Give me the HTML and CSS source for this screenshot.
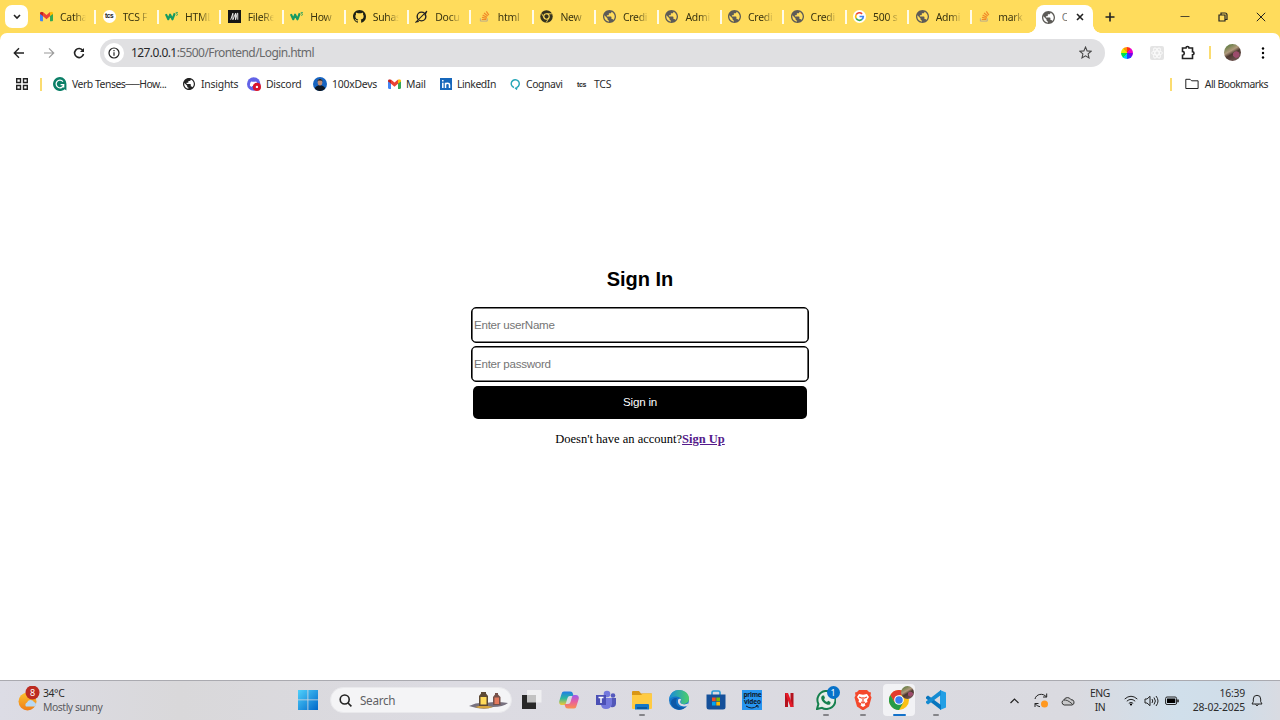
FILE: index.html
```html
<!DOCTYPE html>
<html lang="en">
<head>
<meta charset="utf-8">
<title>Login</title>
<link rel="stylesheet" href="styles.css">
</head>
<body>
<svg class="sprite" aria-hidden="true">
  <defs>
    <linearGradient id="winGrad" x1="0" y1="0" x2="1" y2="1"><stop offset="0" stop-color="#4fd0fb"/><stop offset="1" stop-color="#0067c9"/></linearGradient>
    <linearGradient id="copA" x1="0" y1="0" x2="0" y2="1"><stop offset="0" stop-color="#1f7be8"/><stop offset=".5" stop-color="#2cb8a0"/><stop offset="1" stop-color="#f5c932"/></linearGradient>
    <linearGradient id="copB" x1="0" y1="0" x2="0" y2="1"><stop offset="0" stop-color="#9b5cf0"/><stop offset=".5" stop-color="#e8609c"/><stop offset="1" stop-color="#fb914d"/></linearGradient>
    <linearGradient id="edgeA" x1="0" y1="0" x2="1" y2="0"><stop offset="0" stop-color="#1789dc"/><stop offset="1" stop-color="#4dd06a"/></linearGradient>
    <linearGradient id="sun" x1="0" y1="0" x2="0" y2="1"><stop offset="0" stop-color="#fcc12c"/><stop offset="1" stop-color="#f07d18"/></linearGradient>
  </defs>
  <symbol id="gmail" viewBox="0 0 24 18"><path fill="#4285f4" d="M0 3v13a2 2 0 0 0 2 2h3.500V7z"/><path fill="#34a853" d="M18.500 7v11H22a2 2 0 0 0 2-2V3z"/><path fill="#ea4335" d="M5 0 12 6l7-6v8l-7 6-7-6z"/><path fill="#c5221f" d="M0 3.500C0 .4 3-.8 5.500 1.200V8L0 4.500z"/><path fill="#fbbc04" d="M24 3.500C24 .4 21-.8 18.500 1.200V8L24 4.500z"/></symbol>
  <symbol id="globe" viewBox="2 2 20 20"><path fill="currentColor" d="M12 2C6.480 2 2 6.480 2 12s4.480 10 10 10 10-4.480 10-10S17.520 2 12 2zm-1 17.930c-3.950-.49-7-3.850-7-7.930 0-.62.080-1.210.210-1.790L9 15v1c0 1.100.9 2 2 2v1.930zm6.900-2.540c-.26-.81-1-1.390-1.900-1.390h-1v-3c0-.55-.45-1-1-1H8v-2h2c.55 0 1-.45 1-1V7h2c1.100 0 2-.9 2-2v-.41c2.930 1.190 5 4.060 5 7.410 0 2.080-.8 3.970-2.100 5.390z"/></symbol>
  <symbol id="w3" viewBox="0 0 28 20"><path fill="none" stroke="#169b62" stroke-width="4.500" stroke-linejoin="round" d="M2 5l5 11 4-10 5 10 5-13"/><path fill="none" stroke="#169b62" stroke-width="1.800" d="M23 1h4l-2 3c3 0 3 4-1 3.500"/></symbol>
  <symbol id="stack" viewBox="0 0 24 24"><path fill="none" stroke="#b5a68d" stroke-width="2" d="M3 16v6h15v-6"/><path fill="none" stroke="#f08a28" stroke-width="2.600" d="M6 18.500h10M6.500 14l10 2M8 9l9.500 4.500M11 4.500l8 6.500M16 1l5.500 8"/></symbol>
  <symbol id="chrome" viewBox="0 0 24 24"><circle cx="12" cy="12" r="12" fill="#fbc116"/><path fill="#e33b2e" d="M1.600 6A12 12 0 0 1 22.400 6H12L6.800 15z"/><path fill="#269b48" d="M1.600 6A12 12 0 0 0 12 24l5.200-9H6.800z"/><circle cx="12" cy="12" r="5.800" fill="#fff"/><circle cx="12" cy="12" r="4.500" fill="#3a7df0"/></symbol>
</svg>

<header class="tabstrip">
  <div class="tab-search"><svg width="8" height="6" viewBox="0 0 8 6"><path d="M1 1l3 3 3-3" class="line w15"/></svg></div>
  <nav class="tabs">
    <div class="tab"><svg class="fav" viewBox="0 0 24 24"><use href="#gmail" y="3" width="24" height="18"/></svg><span>Catha</span></div>
    <div class="tab"><b class="fav tcs-round">tcs</b><span>TCS F</span></div>
    <div class="tab"><svg class="fav" viewBox="0 0 28 24"><use href="#w3" y="2" width="28" height="20"/></svg><span>HTML</span></div>
    <div class="tab"><svg class="fav" viewBox="0 0 24 24"><path d="M0 0h24v24H0z" fill="#151515"/><path d="M5 18L9 6v12l5-12v12l3-12h1v12" fill="none" stroke="#fff" stroke-width="1.600"/></svg><span>FileRe</span></div>
    <div class="tab"><svg class="fav" viewBox="0 0 28 24"><use href="#w3" y="2" width="28" height="20"/></svg><span>How</span></div>
    <div class="tab"><svg class="fav" viewBox="0 0 16 16"><path fill="#1d2114" fill-rule="evenodd" d="M8 0C3.580 0 0 3.580 0 8c0 3.540 2.290 6.530 5.470 7.590.4.070.55-.17.55-.38v-1.490c-2.230.48-2.700-.94-2.700-.94-.36-.92-.89-1.170-.89-1.170-.73-.5.050-.49.050-.49.810.06 1.230.83 1.230.83.720 1.230 1.880.87 2.340.67.070-.52.280-.87.510-1.070-1.780-.2-3.640-.89-3.640-3.950 0-.87.310-1.590.82-2.150-.08-.2-.36-1.020.08-2.120 0 0 .67-.21 2.200.82a7.700 7.700 0 0 1 4 0c1.530-1.040 2.200-.82 2.200-.82.440 1.100.16 1.920.08 2.120.51.560.82 1.270.82 2.150 0 3.070-1.870 3.750-3.650 3.950.29.250.54.730.54 1.480v2.200c0 .21.150.46.550.38A8 8 0 0 0 16 8c0-4.420-3.580-8-8-8z"/></svg><span>Suhas</span></div>
    <div class="tab"><svg class="fav" viewBox="0 0 24 24"><circle cx="12" cy="12" r="8" class="line w25"/><path d="M22 2L2 22l5-1M22 2l-4 8" class="line w2"/></svg><span>Docu</span></div>
    <div class="tab"><svg class="fav small" viewBox="0 0 24 24"><use href="#stack"/></svg><span>html</span></div>
    <div class="tab"><svg class="fav" viewBox="0 0 24 24"><circle cx="12" cy="12" r="11.500" fill="#35331f"/><circle cx="12" cy="12" r="5" fill="none" stroke="#ffdc5c" stroke-width="2"/><path d="M12 7h10M7.600 14.500L3 6.500M16.400 14.500L11.500 23" stroke="#ffdc5c" stroke-width="1.600"/></svg><span>New</span></div>
    <div class="tab"><svg class="fav grey" viewBox="0 0 24 24"><use href="#globe"/></svg><span>Credi</span></div>
    <div class="tab"><svg class="fav grey" viewBox="0 0 24 24"><use href="#globe"/></svg><span>Admi</span></div>
    <div class="tab"><svg class="fav grey" viewBox="0 0 24 24"><use href="#globe"/></svg><span>Credi</span></div>
    <div class="tab"><svg class="fav grey" viewBox="0 0 24 24"><use href="#globe"/></svg><span>Credi</span></div>
    <div class="tab"><svg class="fav" viewBox="0 0 24 24"><circle cx="12" cy="12" r="12" fill="#fff"/><g fill="none" stroke-width="3"><path stroke="#ea4335" d="M5.900 8.500A7 7 0 0 1 16.800 7"/><path stroke="#fbbc05" d="M5.900 8.500a7 7 0 0 0 0 7"/><path stroke="#34a853" d="M5.900 15.500A7 7 0 0 0 16.500 17.400"/><path stroke="#4285f4" d="M12 12h7c0 2.300-.9 4-2.500 5.400"/></g></svg><span>500 s</span></div>
    <div class="tab"><svg class="fav grey" viewBox="0 0 24 24"><use href="#globe"/></svg><span>Admi</span></div>
    <div class="tab last"><svg class="fav small" viewBox="0 0 24 24"><use href="#stack"/></svg><span>mark</span></div>
  </nav>
  <div class="tab-active"><svg class="fav grey" viewBox="0 0 24 24"><use href="#globe"/></svg><span>C</span><svg width="8" height="8" viewBox="0 0 8 8"><path d="M1 1l6 6M7 1L1 7" class="line w15"/></svg></div>
  <svg class="new-tab" width="10" height="10" viewBox="0 0 10 10"><path d="M5 .5v9M.5 5h9" class="line w15"/></svg>
  <div class="window-controls">
    <svg width="10" height="10" viewBox="0 0 10 10"><path d="M.5 4.500h9" class="line thin"/></svg>
    <svg width="10" height="10" viewBox="0 0 10 10"><path d="M1 3h6v6H1zM3 2.500V1h4a2 2 0 0 1 2 2v4.500H7.500" class="line w12"/></svg>
    <svg width="10" height="10" viewBox="0 0 10 10"><path d="M.8.8l8.400 8.400M9.200.8L.8 9.200" class="line"/></svg>
  </div>
</header>

<div class="toolbar-wrap">
<section class="toolbar">
  <div class="nav-buttons">
    <svg width="12" height="12" viewBox="0 0 12 12"><path d="M11 6H1.500M6 1.300L1.300 6 6 10.700" class="line w14"/></svg>
    <svg class="disabled" width="12" height="12" viewBox="0 0 12 12"><path d="M1 6h9.500M6 1.300L10.700 6 6 10.700" class="line w12"/></svg>
    <svg width="12" height="12" viewBox="0 0 12 12"><path d="M9.800 3.500A4.500 4.500 0 1 0 10.500 7" class="line w15"/><path d="M11 1v4H7z" fill="#222"/></svg>
  </div>
  <div class="omnibox">
    <div class="site-info"><svg width="12" height="12" viewBox="0 0 12 12"><circle cx="6" cy="6" r="5" class="line w12"/><path d="M6 5.200v3.500M6 3v1.200" class="line w12"/></svg></div>
    <div class="url">127.0.0.1<span>:5500/Frontend/Login.html</span></div>
    <svg class="star" width="13" height="13" viewBox="0 0 24 24"><path d="M12 2l3 7 7.500.7-5.700 5 1.700 7.300-6.500-3.900L5.500 22l1.700-7.300-5.700-5L9 9z" fill="none" stroke="#474747" stroke-width="2"/></svg>
  </div>
  <div class="extensions">
    <div class="color-wheel"></div>
    <svg class="ext-react" width="14" height="14" viewBox="0 0 14 14"><rect width="14" height="14" rx="2" fill="#e4e4e4"/><g fill="none" stroke="#fafafa"><ellipse cx="7" cy="7" rx="5.500" ry="2"/><ellipse cx="7" cy="7" rx="5.500" ry="2" transform="rotate(60 7 7)"/><ellipse cx="7" cy="7" rx="5.500" ry="2" transform="rotate(120 7 7)"/></g></svg>
    <svg class="ext-puzzle" width="15" height="15" viewBox="0 0 15 15"><path d="M1.500 3H5a1.500 1.500 0 0 1 3 0h3.500v3.700a1.500 1.500 0 0 1 0 3v3.800h-10v-3.300c2.400-.2 2.400-3.600 0-3.800z" class="line w15"/></svg>
    <i class="bar"></i>
    <div class="avatar"></div>
    <svg class="menu" width="4" height="12" viewBox="0 0 4 12"><circle cx="2" cy="1.500" r="1.200"/><circle cx="2" cy="6" r="1.200"/><circle cx="2" cy="10.500" r="1.200"/></svg>
  </div>
</section>
</div>

<nav class="bookmarks">
  <svg class="apps" width="12" height="12" viewBox="0 0 12 12"><path d="M.7.700h3.800v3.800H.7zM7.500.7h3.800v3.800H7.500zM.7 7.500h3.800v3.800H.7zM7.500 7.500h3.800v3.800H7.500z" class="line w14"/></svg>
  <i class="bar"></i>
  <a class="bm b1"><svg width="14" height="14" viewBox="0 0 24 24"><path d="M12 0A12 12 0 1 0 20 21l3 2V12A11.500 11.500 0 0 0 12 0z" fill="#0b7f67"/><path d="M17 8A6.500 6.500 0 1 0 18.300 13H13M18.300 12v6" fill="none" stroke="#fff" stroke-width="2.200"/></svg><span>Verb Tenses──How...</span></a>
  <a class="bm b2"><svg class="dark" width="12" height="12" viewBox="0 0 24 24"><use href="#globe"/></svg><span>Insights</span></a>
  <a class="bm b3"><svg width="14" height="14" viewBox="0 0 24 24"><circle cx="11.500" cy="12" r="11.500" fill="#6263e7"/><path d="M5 15c0-4 1-7 2.500-7.500l2 .5h4l2-.5c1.500.5 2.500 3.500 2.500 7.500l-3 2-1-1.500H9L8 17z" fill="#fff"/><circle cx="17" cy="17" r="7" fill="#d9152c"/><circle cx="17" cy="17" r="2" fill="#fff"/></svg><span>Discord</span></a>
  <a class="bm b4"><svg width="14" height="14" viewBox="0 0 24 24"><circle cx="12" cy="12" r="12" fill="#1764c0"/><path d="M3 20q2-6 9-6t9 6a12 12 0 0 1-18 0z" fill="#0e1824"/><ellipse cx="12" cy="9" rx="4" ry="5.500" fill="#c38e74"/><path d="M7.500 8c0-6 9-6 9 0l-2-2H9z" fill="#171b20"/></svg><span>100xDevs</span></a>
  <a class="bm b5"><svg width="13" height="10" viewBox="0 0 24 18"><use href="#gmail"/></svg><span>Mail</span></a>
  <a class="bm b6"><svg width="12" height="12" viewBox="0 0 12 12"><path fill="#1767bb" d="M0 0h12v12H0z"/><path d="M2.800 4.800V10M2.800 2v1.500M5.500 10V4.800M5.500 7c0-2.300 4-2.500 4 0v3" fill="none" stroke="#fff" stroke-width="1.500"/></svg><span>LinkedIn</span></a>
  <a class="bm b7"><svg width="11" height="12" viewBox="0 0 11 12"><path d="M4 9.500A4 4 0 1 1 7 9.300L6.500 11 5 9.700" fill="none" stroke="#24a6b7" stroke-width="1.400"/></svg><span>Cognavi</span></a>
  <a class="bm b8"><b class="tcs">tcs</b><span>TCS</span></a>
  <div class="all-bookmarks"><i class="bar"></i><svg width="14" height="12" viewBox="0 0 14 12"><path d="M.8 1.300h4.300l1.500 1.500h6.500v7.700H.8z" class="line"/></svg><span>All Bookmarks</span></div>
</nav>

<main class="page">
  <h1>Sign In</h1>
  <form>
    <input type="text" placeholder="Enter userName">
    <input type="password" placeholder="Enter password">
    <button type="button">Sign in</button>
  </form>
  <p>Doesn't have an account?<a href="#">Sign Up</a></p>
</main>

<footer class="taskbar">
  <div class="weather">
    <svg width="24" height="26" viewBox="0 0 24 26"><circle cx="9.500" cy="15.500" r="9" fill="url(#sun)"/><path d="M8 20.500a2.500 2.500 0 0 1 1-4 3.800 3.800 0 0 1 7-.5 2.500 2.500 0 0 1 1 4.500z" fill="#b9d8f2"/><circle cx="14.500" cy="6.500" r="7" fill="#bd2c22"/><text x="14.500" y="10" text-anchor="middle" class="badge-text">8</text></svg>
    <div class="weather-text"><span>34°C</span><small>Mostly sunny</small></div>
  </div>
  <div class="launcher">
    <svg class="start" width="20" height="20" viewBox="0 0 20 20"><path fill="url(#winGrad)" d="M0 0h9.500v9.500H0zM10.300 0H20v9.500h-9.700zM0 10.300h9.500V20H0zM10.300 10.300H20V20h-9.700z"/></svg>
    <div class="search"><svg width="13" height="13" viewBox="0 0 13 13"><circle cx="5.700" cy="5.500" r="4.500" class="line w15"/><path d="M9 9l3.400 3.400" class="line w15"/></svg><span>Search</span>
      <svg class="lanterns" width="40" height="20" viewBox="0 0 40 20"><path d="M0 16q8-4 17-3 10-2 22 0-5 4-15 4-9 4-24-1z" fill="#77717f"/><path d="M6 17q8-3 18 0-9 3-18 0z" fill="#d7a53e"/><path d="M10 16V6l2-2.500V2h5v1.500L19 6v10z" fill="#5d4935"/><path d="M11.500 7h6v7.500h-6z" fill="#ffda59"/><path d="M24 15V7l2-2.500V3h3v1.500L31.500 7v8z" fill="#75504a"/><path d="M25.500 7.500H30V14h-4.500z" fill="#e4795d"/></svg>
    </div>
    <div class="apps-row">
      <div class="app"><svg viewBox="0 0 20 20"><path d="M0 5h14v14H0z" fill="#282828"/><path d="M5 0h14.500v12.500H5z" fill="#f5f5f5" opacity=".75"/></svg></div>
      <div class="app"><svg viewBox="0 0 20 20"><path d="M5 1.500h6c2 0 2.500.8 3 2.500l.5 2H11c-1.500 0-2 .8-2.500 2l-1.500 5c-.5 1.500-1 2-2.500 2H3c-2 0-3.300-1.500-2.700-4L2.500 4C3 2.300 3.500 1.500 5 1.500z" fill="url(#copA)"/><path d="M15 18.500H9c-2 0-2.500-.8-3-2.500l-.5-2H9c1.500 0 2-.8 2.500-2L13 7c.5-1.500 1-2 2.500-2H17c2 0 3.300 1.500 2.700 4L17.500 16c-.5 1.700-1 2.500-2.500 2.500z" fill="url(#copB)"/></svg></div>
      <div class="app"><svg viewBox="0 0 20 20"><circle cx="11" cy="4" r="3.300" fill="#7378dd"/><circle cx="17" cy="5.500" r="2.300" fill="#5559bd"/><path d="M14 8h6v6q-1 4-5 3z" fill="#5257b8"/><path d="M5 8h11v6q-1 5-6 5t-5-5z" fill="#7378dd"/><path d="M0 5h10v10H0z" fill="#4b50b5"/><path d="M2.500 7.500h5M5 7.500v5.500" stroke="#fff" stroke-width="1.500"/></svg></div>
      <div class="app open"><svg viewBox="0 0 20 20"><path d="M0 2q0-1 1-1h6l2 2.500h10q1 0 1 1V8H0z" fill="#d99716"/><path d="M0 5h9l2-1.500h9V18q0 1-1 1H1q-1 0-1-1z" fill="#ffcb43"/><path d="M3 19.500V15q0-1 1-1h12q1 0 1 1v4.500z" fill="#1678c8"/><path d="M5 17h10v2H5z" fill="#0d599e"/></svg></div>
      <div class="app"><svg viewBox="0 0 20 20"><circle cx="10" cy="10" r="10" fill="#1475c9"/><path d="M0 9.500C1 3 5 0 10 0c6 0 10 4 10 8.500 0 4-3 5.500-6 5.500-2 0-3-1-2-2.500 1-2-1-5-5-5C4 6.500 1 8 0 9.500z" fill="url(#edgeA)"/><path d="M8 8c-3 6 1 11 9 9-4 4-13 4-15-4C2 10 4 7.500 8 8z" fill="#0e59a7"/><path d="M12 9c0 2-1.500 2.500-.5 4 1.800 2 5.500 1.800 8 .3l-.8 2.200c-4 2-9.200.5-9.700-3.500Q8.500 8 12 9z" fill="#dcdbe2"/></svg></div>
      <div class="app"><svg viewBox="0 0 20 20"><path d="M6 5V2.500Q6 1 7.500 1h5Q14 1 14 2.500V5" fill="none" stroke="#279bd6" stroke-width="1.600"/><path d="M.5 4.500h19V17q0 2.500-2.500 2.500H3Q.5 19.500.5 17z" fill="#15509a"/><path fill="#f25022" d="M6 7.500h3.700v3.700H6z"/><path fill="#7fba00" d="M10.300 7.500H14v3.700h-3.700z"/><path fill="#00a4ef" d="M6 11.800h3.700v3.700H6z"/><path fill="#ffb900" d="M10.300 11.800H14v3.700h-3.700z"/></svg></div>
      <div class="app prime"><span>prime</span><span>video</span><svg viewBox="0 0 20 5"><path d="M4 1q6 4 11 0M14 .7h2v2" fill="none" stroke="#101c2d"/></svg></div>
      <div class="app"><svg viewBox="0 0 20 20"><path fill="#b5121e" d="M6 3h3v14H6zM11.500 3h3v14h-3z"/><path fill="#e51a28" d="M6 3h3l5.500 14h-3z"/></svg></div>
      <div class="app open"><svg viewBox="0 0 20 20"><path d="M1 19l1.400-5A9 9 0 1 1 6 17.800z" fill="#e8ede9" stroke="#16804e" stroke-width="2"/><path d="M6.500 5.500l1.500 0 1 2.500-1 1.200q1 2 3 2.800l1.200-1.200 2.300 1.200c.4 4-3.500 3-6 1.200C5.500 11 4 7 6.500 5.500z" fill="#16804e"/></svg><b class="count">1</b></div>
      <div class="app open"><svg viewBox="0 0 20 20"><path d="M6 0h8l2 2 2 .5-.5 3 1 2-2.500 9L10 20.500 4 16.500 1.500 7.500l1-2L2 2.500 4 2z" fill="#f4482c"/><path d="M6 4l4 .8L14 4l2 3-2 3 .5 2-3 1.500 1 2L10 17l-2.500-1.500 1-2-3-1.500.5-2-2-3z" fill="#fff"/><path d="M6 7l3 1.200M14 7l-3 1.200M10 7v5M8 12l2 1 2-1" fill="none" stroke="#f4482c" stroke-width="1.200"/></svg></div>
      <div class="app active"><svg viewBox="0 0 20 20"><use href="#chrome"/></svg><i class="profile"></i></div>
      <div class="app open"><svg viewBox="0 0 20 20"><path d="M14 0l6 2.500v15L14 20z" fill="#229fe5"/><path d="M0 7l2-1.500L15 15v5L0 8.500z" fill="#0875bd"/><path d="M0 13l2 1.500L15 5V0L0 11.500z" fill="#148bd2"/></svg></div>
    </div>
  </div>
  <div class="tray">
    <svg class="caret" width="9" height="6" viewBox="0 0 9 6"><path d="M.5 5l4-4 4 4" class="line w12"/></svg>
    <svg class="sync" width="15" height="15" viewBox="0 0 15 15"><path d="M1 6C2 1 9-.5 12.500 4M12.700.5V4H9M1 14v-3.500h3.500M1 10.500q2 3 5 3.200" class="line"/><circle cx="10.500" cy="11" r="3.500" fill="#ff9820"/></svg>
    <svg class="cloud" width="14" height="10" viewBox="0 0 14 10"><path d="M3.200 9A2.600 2.600 0 0 1 2.800 4 4 4 0 0 1 10 3.700 2.700 2.700 0 0 1 11 9z" fill="#c8c8ca" stroke="#333"/><path d="M3 4.200q3-1 8.500 4" class="line thin"/></svg>
    <div class="lang"><span>ENG</span><span>IN</span></div>
    <svg class="wifi" width="14" height="11" viewBox="0 0 14 11"><path d="M.7 4Q7-1.500 13.300 4M2.800 6.200q4.200-3.700 8.400 0M4.800 8.300q2.200-1.700 4.400 0" class="line"/><circle cx="7" cy="9.500" r="1.100"/></svg>
    <svg class="sound" width="15" height="12" viewBox="0 0 15 12"><path d="M1 4h2l3-2.700v9.400L3 8H1zM8 4q1.500 2 0 4M10 2.500q2.800 3.500 0 7M12 1q4 5 0 10" class="line"/></svg>
    <svg class="battery" width="14" height="10" viewBox="0 0 14 10"><rect x=".6" y="1" width="11" height="7.500" rx="1.500" class="line"/><path d="M2 2.500h8.300V7H2z"/><path d="M13 3.500v2.800" class="line w15"/></svg>
    <div class="clock"><span>16:39</span><span>28-02-2025</span></div>
    <svg class="bell" width="12" height="13" viewBox="0 0 12 13"><path d="M1 10h10L9.700 7.700V5a3.700 3.700 0 0 0-7.400 0v2.700zM4.500 10.500q1.500 2.500 3 0" class="line"/></svg>
  </div>
</footer>
</body>
</html>
```
FILE: styles.css
```css
* { box-sizing: border-box; }
html, body { height: 100%; }
body { margin: 0; display: flex; flex-direction: column; overflow: hidden; background: #fff; color: #2b2b2b; font-family: "Noto Sans", "Open Sans", sans-serif; font-size: 10.4px; }
svg { display: block; flex: none; }
.sprite { position: absolute; width: 0; height: 0; }
.line { fill: none; stroke: #222; stroke-width: 1; }
.thin { stroke-width: .8; }
.w12 { stroke-width: 1.2; }
.w14 { stroke-width: 1.4; }
.w15 { stroke-width: 1.6; }
.w2 { stroke-width: 2; }
.w25 { stroke-width: 2.6; }
.bar { width: 2px; height: 13px; background: #fbdc70; flex: none; }

.tabstrip { height: 33px; flex: none; display: flex; align-items: center; background: #ffdc5c; }
.tab-search { width: 23px; height: 23px; margin: 0 4px 0 5px; border-radius: 7px; background: #fff; display: grid; place-items: center; flex: none; }
.tabs { display: flex; flex: none; }
.tab { width: 62.55px; height: 14px; display: flex; align-items: center; padding-left: 8px; gap: 7px; position: relative; }
.tab::after { content: ""; position: absolute; right: -1.5px; top: 0; width: 2px; height: 14px; background: #fffbe8; }
.tab.last::after { display: none; }
.tab span { width: 26px; overflow: hidden; white-space: nowrap; color: #37320f; letter-spacing: -.25px; line-height: 16px; -webkit-mask-image: linear-gradient(90deg, #000 55%, transparent); mask-image: linear-gradient(90deg, #000 55%, transparent); }
.fav { width: 13px; height: 13px; flex: none; }
.fav.small { padding: 1px; }
.grey { color: #5d5b57; }
.dark { color: #222; }
.tcs-round { border-radius: 50%; background: #fff; font: bold 6.5px/12px "Liberation Sans", sans-serif; text-align: center; letter-spacing: -.4px; color: #222; }
.tab-active { position: relative; align-self: flex-end; width: 57px; height: 28px; margin-left: 3px; padding: 0 9px 4px 6px; border-radius: 8px 8px 0 0; background: #fff; display: flex; align-items: center; flex: none; }
.tab-active span { width: 5px; overflow: hidden; margin-left: 7px; color: #777; }
.tab-active svg:last-child { margin-left: auto; }
.tab-active::before, .tab-active::after { content: ""; position: absolute; bottom: 0; width: 8px; height: 8px; }
.tab-active::before { left: -8px; background: radial-gradient(circle at 0 0, transparent 7.5px, #fff 8px); }
.tab-active::after { right: -8px; background: radial-gradient(circle at 100% 0, transparent 7.5px, #fff 8px); }
.new-tab { margin-left: 12px; }
.window-controls { margin-left: auto; padding-right: 14px; display: flex; gap: 28px; }

.toolbar-wrap { flex: none; background: #ffdc5c; }
.toolbar { height: 39px; display: flex; align-items: center; background: #fff; border-radius: 7px 7px 0 0; }
.nav-buttons { display: flex; gap: 18px; padding: 0 15px 0 13px; }
.disabled { opacity: .45; }
.omnibox { width: 1005px; height: 28px; border-radius: 14px; background: #e0e0e2; display: flex; align-items: center; padding: 0 13px 0 4px; flex: none; }
.site-info { width: 20px; height: 20px; border-radius: 50%; background: #fff; display: grid; place-items: center; }
.url { margin-left: 7px; font-size: 12px; letter-spacing: -.58px; color: #27282a; }
.url span { color: #68696b; }
.star { margin-left: auto; }
.extensions { flex: 1; display: flex; align-items: center; padding-left: 16px; }
.color-wheel { width: 12px; height: 12px; border-radius: 50%; background: conic-gradient(#ff2b20 0 10%, #ed00c7 10% 25%, #7d00e8 25% 37%, #263bff 37% 50%, #00caff 50% 62%, #00e24d 62% 75%, #e6e900 75% 88%, #ff9800 88%); }
.ext-react { margin: 0 17px 0 17px; }
.ext-puzzle { margin-right: 13px; }
.avatar, .profile { border-radius: 50%; background: radial-gradient(circle at 72% 62%, #9c4c6c 0 18%, transparent 22%), linear-gradient(150deg, #6a8049 15%, #b19a7d 40%, #4d3830 55%, #69504c 80%); }
.avatar { width: 17px; height: 17px; margin: 0 20px 0 13px; }

.bookmarks { height: 24px; flex: none; display: flex; align-items: center; white-space: nowrap; letter-spacing: -.22px; }
.apps { margin: 0 12px 0 16px; }
.bm { display: flex; align-items: center; gap: 5px; flex: none; }
.b1 { margin-left: 11px; width: 130px; }
.b1 span { letter-spacing: -.46px; }
.b2 { width: 64px; gap: 6px; }
.b3 { width: 66px; }
.b4 { width: 75px; }
.b5 { width: 52px; }
.b6 { width: 70px; }
.b6 span { letter-spacing: -.42px; }
.b7 { width: 67px; }
.b7 span { letter-spacing: -.4px; }
.tcs { width: 12px; font: bold 7px "Liberation Sans", sans-serif; letter-spacing: -.4px; }
.all-bookmarks { display: flex; align-items: center; margin-left: auto; padding-right: 12px; letter-spacing: -.52px; }
.all-bookmarks svg { margin: 0 6px 0 13px; }

.page { flex: 1; display: flex; flex-direction: column; align-items: center; padding-top: 171px; color: #000; }
.page h1 { margin: 0; font: bold 20px/24px "Liberation Sans", Arial, sans-serif; }
.page form { width: 338px; margin-top: 16px; display: flex; flex-direction: column; align-items: center; gap: 3.3px; }
.page input { width: 338px; height: 36px; border: 1px solid #000; box-shadow: inset 0 0 0 .6px #000; border-radius: 5px; padding: 0 2px 1px; background: #fff; font: 11.6px "Liberation Sans", Arial, sans-serif; letter-spacing: -.27px; }
.page input::placeholder { color: #757575; }
.page button { width: 334px; height: 33px; border: 0; border-radius: 5px; background: #000; color: #fff; padding: 0 0 1px; font: 11.6px "Liberation Sans", Arial, sans-serif; letter-spacing: -.2px; }
.page p { margin: 13px 0 0; font: 12.5px/15px "Liberation Serif", "Times New Roman", serif; }
.page a { color: #551a8b; font-weight: bold; }

.taskbar { height: 40px; flex: none; display: flex; align-items: center; border-top: 1px solid #aaaab0; background: linear-gradient(90deg, #dcdce5 0, #d9d8da 14%, #dcdbe2 35%, #dadae0 84%, #d0dfeb 92%, #d0dde8 97%, #d9dbe2 100%); }
.weather { width: 298px; display: flex; align-items: center; gap: 1px; padding-left: 18px; }
.weather svg { margin-top: -4px; }
.badge-text { fill: #fff; font-size: 9px; font-family: "Noto Sans", sans-serif; }
.weather-text { display: flex; flex-direction: column; line-height: 13.5px; }
.weather-text span { letter-spacing: -.4px; }
.weather-text small { font-size: 10.4px; letter-spacing: -.45px; color: #5b5b61; }
.launcher { display: flex; align-items: center; padding-bottom: 1px; }
.start { margin-right: 12px; }
.search { width: 182px; height: 26px; border: 1px solid #e9e9ec; border-radius: 13px; background: #f4f4f6; display: flex; align-items: center; padding: 0 2px 0 8px; gap: 8px; font-size: 11.7px; letter-spacing: -.3px; color: #606064; }
.lanterns { margin-left: auto; }
.apps-row { display: flex; margin-left: 2px; }
.app { position: relative; width: 36.7px; height: 32px; display: grid; place-items: center; }
.app > svg { width: 20px; height: 20px; }
.open::after, .active::after { content: ""; position: absolute; left: 50%; bottom: 0; width: 6px; height: 2.5px; margin-left: -3px; border-radius: 2px; background: #848489; }
.active { width: 32px; margin: 0 2.35px; border-radius: 4px; background: #f2f2f5; }
.active::after { width: 13px; margin-left: -6.5px; background: #1472ca; }
.count { position: absolute; left: 19px; top: 2px; width: 13px; height: 13px; border-radius: 50%; background: #0872c9; color: #fff; font-size: 9px; font-weight: 400; line-height: 13px; text-align: center; }
.profile { position: absolute; right: 1px; top: 2px; width: 13px; height: 13px; }
.prime { width: 20px; height: 20px; margin: 6px 8.35px; display: flex; flex-direction: column; align-items: center; background: #2795ef; color: #101c2d; font: bold 6.5px/7px "Noto Sans", sans-serif; letter-spacing: -.2px; padding-top: 1px; }
.prime > svg { height: 5px; }
.tray { margin-left: auto; display: flex; align-items: center; padding-right: 17px; line-height: 13.5px; }
.sync { margin-left: 15px; }
.cloud { margin-left: 12px; }
.lang { width: 26px; margin-left: 12px; display: flex; flex-direction: column; align-items: center; letter-spacing: -.45px; }
.wifi { margin-left: 11px; }
.sound { margin-left: 6px; }
.battery { margin-left: 6px; }
.clock { width: 66px; display: flex; flex-direction: column; align-items: flex-end; letter-spacing: -.2px; white-space: nowrap; }
.bell { margin-left: 6px; }
```
